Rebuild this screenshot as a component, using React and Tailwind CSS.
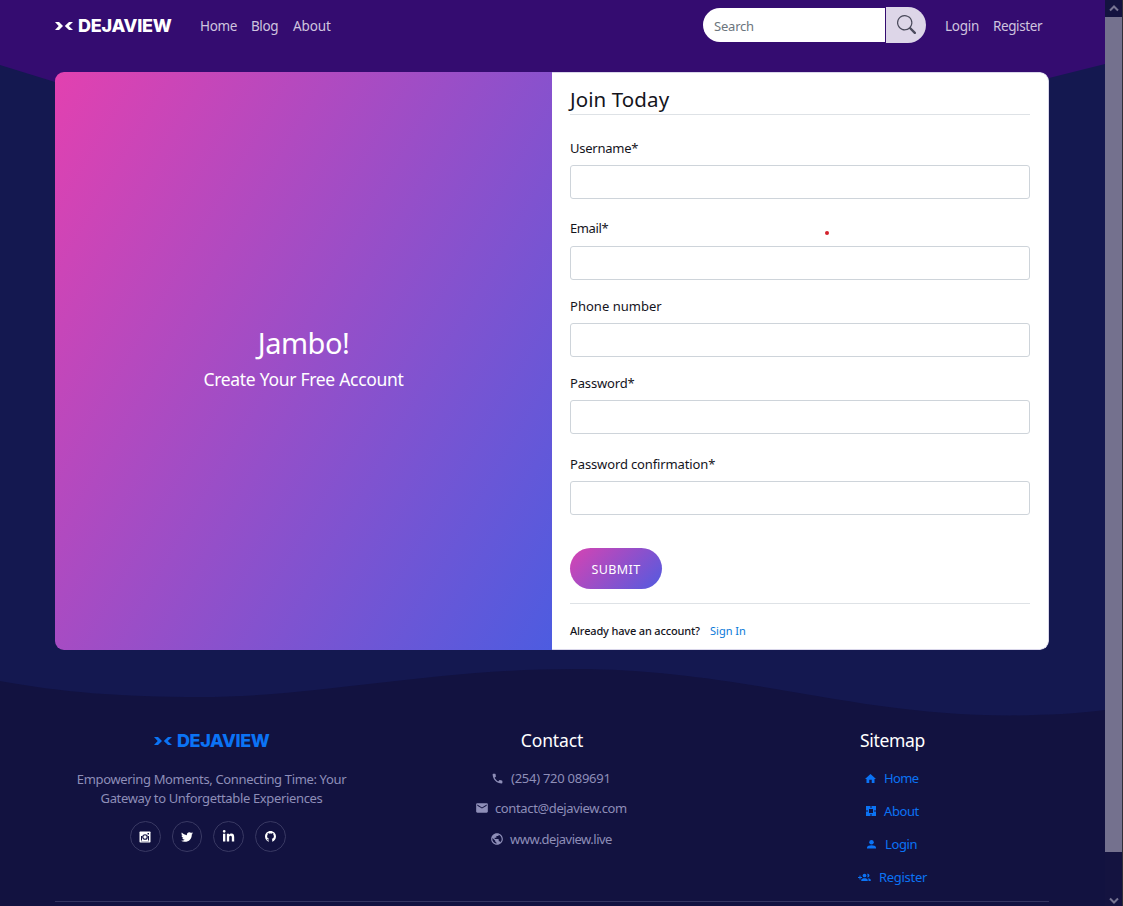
import React from "react";
import { FaTwitter, FaLinkedinIn } from "react-icons/fa";
import { MdPhone, MdEmail, MdPublic } from "react-icons/md";

const fields = [
  { label: "Username*", gap: "mt-[23px]", labelClass: "h-[27px] tracking-[-0.25px]" },
  { label: "Email*", gap: "mt-[19px]", labelClass: "h-[28px] tracking-[-0.4px]" },
  { label: "Phone number", gap: "mt-[16px]", labelClass: "h-[27px] tracking-[0.02px]" },
  { label: "Password*", gap: "mt-[16px]", labelClass: "h-[27px] tracking-[-0.15px]" },
  { label: "Password confirmation*", gap: "mt-[20px]", labelClass: "h-[27px] tracking-[-0.13px]" },
];

function Backdrop() {
  return (
    <svg className="absolute inset-0" width="1105" height="906" viewBox="0 0 1105 906">
      <path d="M0 0H1105V64L1049 78L700 160H300L55 82L0 65Z" fill="#340c70" />
      <path
        d="M0 681C60 692 120 697 200 697C320 697 430 669 575 669C740 669 850 715.500 1010 715.500C1045 715 1075 714 1105 710V906H0Z"
        fill="#121240"
      />
    </svg>
  );
}

function Brand({ className, wordClass }) {
  return (
    <span className={`flex items-center font-['Inter','Open_Sans',sans-serif] text-[18px] leading-[22px] font-extrabold ${className}`}>
      <svg className="mr-[5px] shrink-0" width="18" height="10" viewBox="0 0 18 10" fill="currentColor">
        <path d="M0 1H4L8 5L4 9H0L3.700 5ZM18 1H14L9.800 5L14 9H18L13.800 5Z" />
      </svg>
      <span className={wordClass}>DEJAVIEW</span>
    </span>
  );
}

function SearchIcon() {
  return (
    <svg className="-mt-px" width="19" height="19" viewBox="0 0 16 16" fill="#4b4b5c">
      <path d="M11.742 10.344a6.5 6.5 0 1 0-1.397 1.398h-.001c.03.04.062.078.098.115l3.85 3.85a1 1 0 0 0 1.415-1.414l-3.85-3.85a1.007 1.007 0 0 0-.115-.1zM12 6.5a5.5 5.5 0 1 1-11 0 5.5 5.5 0 0 1 11 0z" />
    </svg>
  );
}

function InstagramIcon() {
  return (
    <svg width="12" height="12" viewBox="0 0 24 24">
      <rect x="1" y="1" width="22" height="22" rx="1.5" fill="white" />
      <path d="M17 4H20V7H17ZM4 10H6V19H18V10H20V21H4Z" fill="#121240" />
      <rect x="5" y="18" width="14" height="2" fill="white" />
      <circle cx="12" cy="12" r="4.500" fill="white" stroke="#121240" strokeWidth="2.400" />
      <rect x="4" y="20" width="16" height="1" fill="white" />
    </svg>
  );
}

function OctocatIcon() {
  return (
    <svg width="11" height="11" viewBox="0 0 16 16" fill="white">
      <path d="M8 0C3.6 0 0 3.6 0 8C0 11.500 2.300 14.600 5.500 15.600V13.600C3.500 13.900 3 12.500 2.300 12C3.800 11.600 4 12.600 5.600 12.300C5.700 11.900 5.900 11.500 6.100 11.300C4.100 11 3.100 9.800 3.100 7.500C3.100 6.600 3.400 5.800 4 5.200C3.800 4.500 3.800 3.700 4.100 3C5 3 5.700 3.500 6.300 4C7.400 3.700 8.600 3.700 9.700 4C10.300 3.500 11 3 11.900 3C12.200 3.700 12.200 4.500 12 5.200C12.600 5.800 12.900 6.600 12.900 7.500C12.900 9.800 11.900 11 9.900 11.300C10.300 11.700 10.500 12.300 10.500 13V15.600C13.700 14.600 16 11.500 16 8C16 3.600 12.400 0 8 0Z" />
    </svg>
  );
}

function HomeIcon() {
  return (
    <svg width="11" height="9" viewBox="0 0 22 18" fill="currentColor">
      <path d="M11 0L22 10H19V18H13.500V11.500H8.500V18H3V10H0Z" />
    </svg>
  );
}

function AboutIcon() {
  return (
    <svg width="10" height="10" viewBox="0 0 10 10" fill="currentColor" fillRule="evenodd">
      <path d="M0 0H4.500V2H5.500V0H10V4.500H8V5.500H10V10H5.500V8H4.500V10H0V5.500H2V4.500H0ZM3 3V4.200H4.200V3H5.800V4.200H7V5.800H5.800V7H4.200V5.800H3V7H7V3Z" />
      <rect x="3" y="3" width="4" height="4" fill="#121240" />
    </svg>
  );
}

function LoginIcon() {
  return (
    <svg width="9" height="9" viewBox="0 0 18 18" fill="currentColor">
      <circle cx="9" cy="4.500" r="4.500" />
      <path d="M0 17V14.500C0 12 5 10.500 9 10.500S18 12 18 14.500V17Z" />
    </svg>
  );
}

function RegisterIcon() {
  return (
    <svg className="shrink-0" width="13" height="9" viewBox="0 0 26 18" fill="currentColor">
      <path d="M3 5H5V8H8V10H5V13H3V10H0V8H3Z" />
      <circle cx="13" cy="5" r="3.700" />
      <path d="M18 1.500A3.700 3.700 0 1 1 18 8.500A6 6 0 0 0 18 1.500ZM6.500 16V14C6.500 11.500 10 10.300 13 10.300S19.500 11.500 19.500 14V16ZM21 16V13.500C21 12.200 20.300 11.200 19.500 10.500C22.500 10.700 25.500 12 25.500 14V16Z" />
    </svg>
  );
}

const socials = [
  { icon: <InstagramIcon />, name: "ig" },
  { icon: <FaTwitter size={12} />, name: "tw" },
  { icon: <FaLinkedinIn size={13} />, name: "li" },
  { icon: <OctocatIcon />, name: "gh" },
];

function Header() {
  return (
    <header className="flex h-[52px] items-center pl-[55px] text-[13.5px] leading-5 text-[#cfc4df]">
      <Brand className="w-[145px] text-white" wordClass="tracking-[-0.25px]" />
      <nav className="flex">
        <a className="w-[51px] tracking-[-0.35px]">Home</a>
        <a className="w-[42px] tracking-[-0.4px]">Blog</a>
        <a className="w-[60px] tracking-[-0.1px]">About</a>
      </nav>
      <div className="ml-[350px] -mt-[2px] flex items-center">
        <div className="flex h-[34px] w-[182px] items-center rounded-l-full bg-white pt-[2px] pl-[11px] text-[13px] tracking-[-0.2px] text-[#6c757d]">Search</div>
        <div className="ml-px flex h-9 w-10 items-center justify-center rounded-r-full bg-[#ddd6e8]"><SearchIcon /></div>
      </div>
      <nav className="ml-[19px] flex">
        <a className="w-12 tracking-[-0.25px]">Login</a>
        <a className="tracking-[-0.4px]">Register</a>
      </nav>
    </header>
  );
}

function JoinCard() {
  return (
    <main className="mt-5 ml-[55px] flex h-[578px] w-[994px] overflow-hidden rounded-[9px]">
      <section className="flex w-[497px] flex-col items-center bg-[linear-gradient(120deg,#e241b0_0%,#4d5ce0_100%)] pt-[251px] text-white">
        <h1 className="text-[29px] leading-[40px] tracking-[-0.5px]">Jambo!</h1>
        <p className="mt-[3px] text-[17.5px] leading-[26px] tracking-[-0.3px]">Create Your Free Account</p>
      </section>
      <section className="w-[497px] rounded-r-[9px] border-y border-r border-[#d9d6ea] bg-white px-[18px] pt-[11px] text-[#14141c]">
        <h2 className="h-[31px] border-b border-[#dee2e6] text-[20.5px] leading-[30px] tracking-[0.1px]">Join Today</h2>
        {fields.map((f) => (
          <div key={f.label} className={f.gap}>
            <label className={`block text-[13px] leading-5 ${f.labelClass}`}>{f.label}</label>
            <div className="h-[34px] rounded-[3px] border border-[#ced4da] bg-white" />
          </div>
        ))}
        <button className="mt-[33px] block h-[41px] w-[92px] rounded-full bg-[linear-gradient(135deg,#d843b2_0%,#525be0_100%)] pt-[3px] text-[12.5px] tracking-[0.4px] text-white">SUBMIT</button>
        <div className="mt-[14px] flex border-t border-[#dee2e6] pt-[18px] text-[11px] leading-[18px]">
          <span className="w-[140px] font-medium tracking-[-0.16px]">Already have an account?</span>
          <a className="text-[#0878d8]">Sign In</a>
        </div>
      </section>
    </main>
  );
}

function IconLine({ icon, text, className, textClass = "" }) {
  return (
    <div className={`flex h-5 items-center leading-5 ${className}`}>
      <span className="flex w-[13px] shrink-0 justify-center">{icon}</span>
      <span className={textClass}>{text}</span>
    </div>
  );
}

function Footer() {
  return (
    <footer className="mt-[79px] ml-[55px] flex h-[173px] w-[994px] border-b border-[#34345f] text-[13px] text-[#8e8eb8]">
      <div className="w-[313px]">
        <Brand className="mt-px ml-[99px] text-[#0b73f5]" wordClass="tracking-[-0.4px]" />
        <p className="mt-[18px] text-center leading-[19px] tracking-[-0.35px]">
          Empowering Moments, Connecting Time: Your<br />Gateway to Unforgettable Experiences
        </p>
        <div className="mt-[13px] ml-[75px] flex gap-[11px] text-white">
          {socials.map((s) => (
            <span key={s.name} className="flex size-[30.700px] items-center justify-center rounded-full border border-[#393963] pt-px">{s.icon}</span>
          ))}
        </div>
      </div>
      <div className="w-[368px]">
        <h3 className="-mt-px text-center text-[17.5px] leading-6 tracking-[-0.1px] text-white">Contact</h3>
        <IconLine className="mt-[16px] ml-[123px] gap-[7px]" icon={<MdPhone size={13} />} text="(254) 720 089691" textClass="tracking-[-0.26px]" />
        <IconLine className="mt-[10px] ml-[107px] gap-[7px]" icon={<MdEmail size={14} className="shrink-0" />} text="contact@dejaview.com" textClass="tracking-[-0.37px]" />
        <IconLine className="mt-[11px] ml-[122px] gap-[7px]" icon={<MdPublic size={14} className="shrink-0" />} text="www.dejaview.live" textClass="tracking-[-0.5px]" />
      </div>
      <div className="w-[313px] text-[#0b73f5]">
        <h3 className="-mt-px text-center text-[17.5px] leading-6 tracking-[-0.35px] text-white">Sitemap</h3>
        <IconLine className="mt-[16px] ml-[128px] gap-[7px]" icon={<HomeIcon />} text="Home" textClass="tracking-[-0.6px]" />
        <IconLine className="mt-[13px] ml-[128px] gap-[7px]" icon={<AboutIcon />} text="About" textClass="tracking-[-0.4px]" />
        <IconLine className="mt-[13px] ml-[129px] gap-[7px]" icon={<LoginIcon />} text="Login" textClass="tracking-[-0.4px]" />
        <IconLine className="mt-[13px] ml-[122px] gap-[8px]" icon={<RegisterIcon />} text="Register" textClass="tracking-[-0.3px]" />
      </div>
    </footer>
  );
}

function Scrollbar() {
  return (
    <div className="flex h-[906px] w-[18px] flex-col items-center border-r border-[#303038] bg-[#141340] text-[#777592]">
      <svg className="h-[17px] shrink-0" width="10" viewBox="0 0 10 17" fill="none" stroke="currentColor" strokeWidth="2"><path d="M1 10.500L5 6.500L9 10.500" /></svg>
      <div className="h-[835px] w-full shrink-0 bg-[#74718e]" />
      <div className="h-[39px] shrink-0" />
      <svg className="shrink-0" width="10" height="15" viewBox="0 0 10 15" fill="none" stroke="currentColor" strokeWidth="2"><path d="M1 7.500L5 11.500L9 7.500" /></svg>
    </div>
  );
}

export default function App() {
  return (
    <div className="relative flex h-[906px] w-[1123px] overflow-hidden bg-[#141850] font-['Noto_Sans','Open_Sans',sans-serif]">
      <Backdrop />
      <div className="relative w-[1105px] whitespace-nowrap">
        <Header />
        <JoinCard />
        <Footer />
        <span className="absolute top-[231px] left-[825px] size-1 rounded-full bg-[#d4222c]" />
      </div>
      <Scrollbar />
    </div>
  );
}
